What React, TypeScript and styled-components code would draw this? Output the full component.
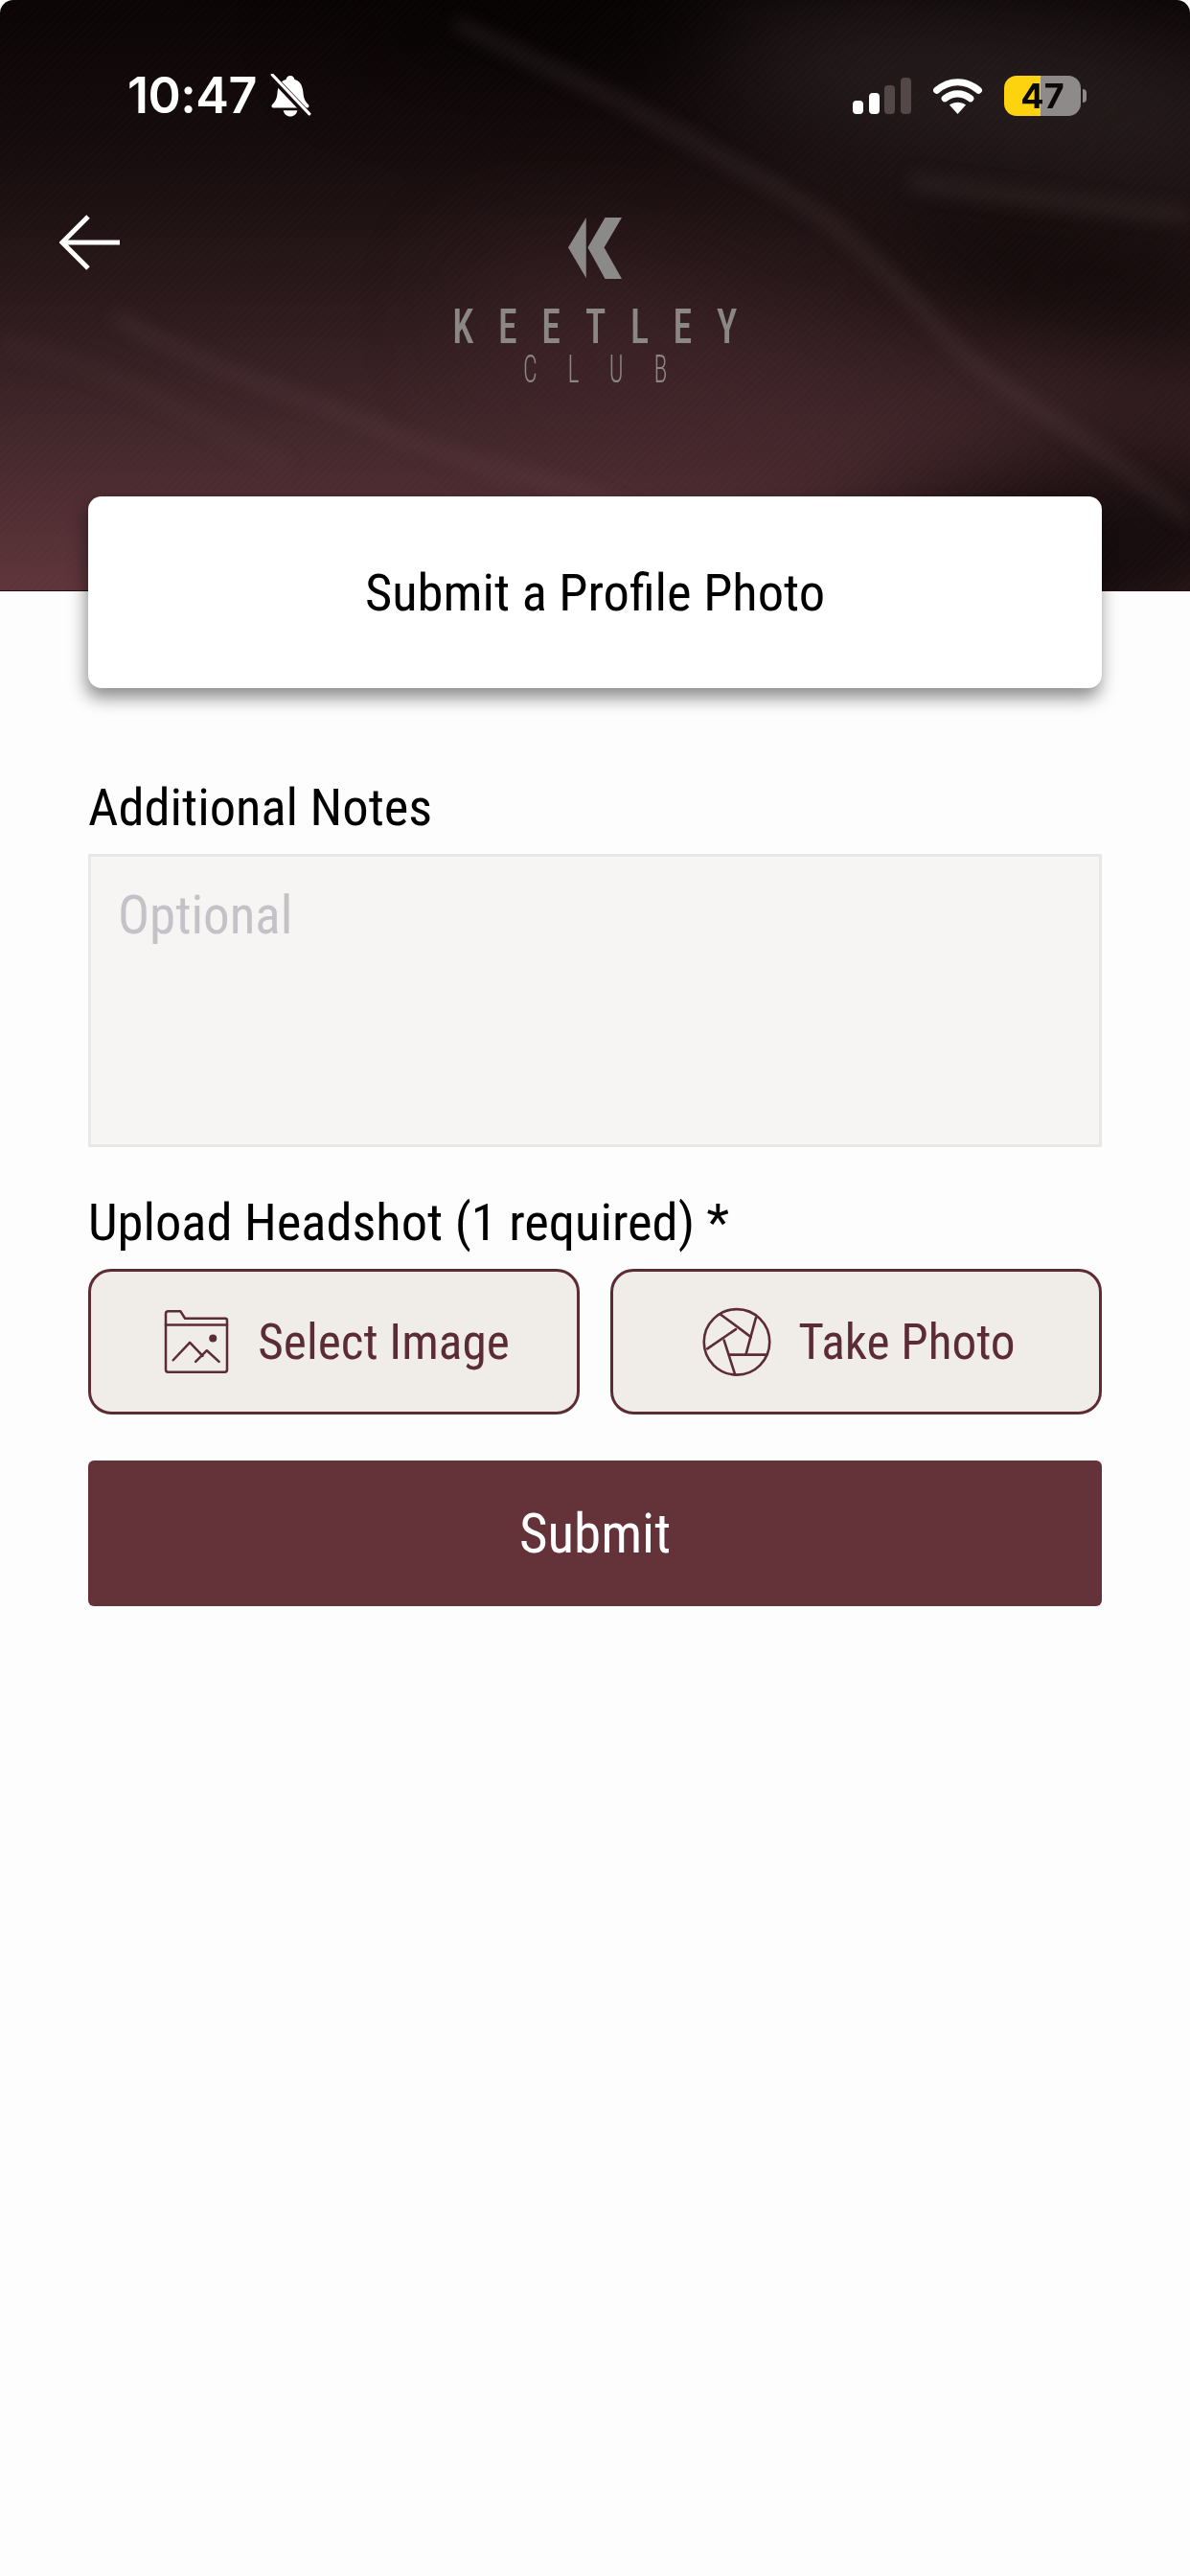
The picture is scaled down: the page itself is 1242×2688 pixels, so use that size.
import React from "react";
import styled, { createGlobalStyle } from "styled-components";

const GlobalStyle = createGlobalStyle`
  html, body {
    margin: 0;
    padding: 0;
    background: #fdfdfd;
  }
  * {
    box-sizing: border-box;
  }
`;

const maroon = "#5c2c35";
const condensed = `"Roboto", "Liberation Sans", sans-serif`;

const Page = styled.div`
  background: #fdfdfd;
  display: flex;
  flex-direction: column;
  font-family: ${condensed};
  font-stretch: 75%;
  height: 2688px;
  width: 1242px;
`;

const Header = styled.header`
  background: linear-gradient(180deg, #0b0505 0%, #160c0d 25%, #2a191b 50%, #44282c 75%, #5f353b 100%);
  border-bottom: 1px solid #2a1015;
  border-top-left-radius: 14px;
  border-top-right-radius: 14px;
  flex: none;
  height: 617px;
  overflow: hidden;
  position: relative;
`;

const Fabric = styled.svg`
  height: 100%;
  left: 0;
  position: absolute;
  top: 0;
  width: 100%;
`;

const StatusBar = styled.div`
  align-items: center;
  display: flex;
  justify-content: space-between;
  padding: 72px 114px 0 133px;
  position: relative;
`;

const TimeGroup = styled.div`
  align-items: center;
  display: flex;
  gap: 12px;
`;

const Time = styled.span`
  color: #fff;
  font-family: "Inter", sans-serif;
  font-size: 52px;
  font-stretch: 100%;
  font-weight: 600;
  letter-spacing: -0.5px;
  line-height: 56px;
`;

const StatusIcons = styled.div`
  align-items: center;
  display: flex;
  gap: 22px;
`;

const Battery = styled.div`
  align-items: center;
  background: linear-gradient(90deg, #fdd30f 0 47%, #8e8a8a 47% 100%);
  border-radius: 13px;
  color: #0b0807;
  display: flex;
  font-family: "Inter", sans-serif;
  font-size: 36px;
  font-stretch: 100%;
  font-weight: 700;
  height: 42px;
  justify-content: center;
  position: relative;
  width: 80px;

  &::after {
    background: #8e8a8a;
    border-radius: 0 6px 6px 0;
    content: "";
    height: 14px;
    position: absolute;
    right: -6px;
    top: 14px;
    width: 4px;
  }
`;

const NavRow = styled.div`
  align-items: flex-start;
  display: flex;
  padding: 78px 0 0 62px;
  position: relative;
`;

const BackButton = styled.button`
  background: none;
  border: 0;
  display: block;
  flex: none;
  height: 94px;
  margin: 0;
  padding: 0;
  width: 64px;
`;

const Logo = styled.div`
  align-items: center;
  color: #8b8787;
  display: flex;
  flex-direction: column;
  margin-left: 155px;
  margin-top: 21px;
  width: 680px;
`;

const KeetleyText = styled.div`
  font-family: "Roboto", sans-serif;
  font-size: 50px;
  font-stretch: 75%;
  font-weight: 500;
  letter-spacing: 32px;
  line-height: 50px;
  margin-right: -26px;
  margin-top: 25px;
  transform: scaleX(0.8);
`;

const ClubText = styled.div`
  font-family: "Roboto", sans-serif;
  font-size: 40px;
  font-stretch: 75%;
  font-weight: 300;
  letter-spacing: 49px;
  line-height: 40px;
  margin-right: -32px;
  margin-top: 0;
  transform: scaleX(0.65);
`;

const Content = styled.main`
  display: flex;
  flex-direction: column;
  margin-top: -99px;
  padding: 0 92px;
  position: relative;
`;

const TitleCard = styled.div`
  align-items: center;
  background: #fff;
  border-radius: 14px;
  box-shadow: -2px 10px 18px rgba(0, 0, 0, 0.45);
  color: #000;
  display: flex;
  font-size: 54.5px;
  height: 200px;
  justify-content: center;
`;

const FieldLabel = styled.label`
  color: #000;
  display: block;
  font-size: 54.5px;
  line-height: 60px;
`;

const NotesLabel = styled(FieldLabel)`
  margin-top: 94px;
`;

const UploadLabel = styled(FieldLabel)`
  margin-top: 48px;
`;

const NotesInput = styled.textarea`
  background: #f6f5f4;
  border: 3px solid #e9e8e8;
  display: block;
  font-family: ${condensed};
  font-size: 55px;
  font-stretch: 75%;
  height: 306px;
  margin-top: 19px;
  outline: none;
  padding: 29px 28px;
  resize: none;
  width: 100%;

  &::placeholder {
    color: #c4c2c7;
    opacity: 1;
  }
`;

const UploadRow = styled.div`
  display: grid;
  gap: 32px;
  grid-template-columns: 1fr 1fr;
  margin-top: 19px;
`;

const UploadButton = styled.button<{ $gap: number }>`
  align-items: center;
  background: #f0ece8;
  border: 3px solid ${maroon};
  border-radius: 24px;
  color: ${maroon};
  display: flex;
  font-family: ${condensed};
  font-size: 51.3px;
  font-stretch: 75%;
  gap: ${(p) => p.$gap}px;
  height: 152px;
  justify-content: center;
  padding: 0 0 0 6px;
`;

const SubmitButton = styled.button`
  background: #64333a;
  border: 0;
  border-radius: 6px;
  color: #fff;
  font-family: ${condensed};
  font-size: 57px;
  font-stretch: 75%;
  height: 152px;
  margin-top: 48px;
  padding: 0;
  width: 100%;
`;

const FabricArt = () => (
  <Fabric viewBox="0 0 1242 617" preserveAspectRatio="none" aria-hidden="true">
    <defs>
      <filter id="soft" filterUnits="userSpaceOnUse" x="-300" y="-300" width="1842" height="1217" colorInterpolationFilters="sRGB">
        <feGaussianBlur stdDeviation="55" />
      </filter>
      <filter id="fine" filterUnits="userSpaceOnUse" x="-300" y="-300" width="1842" height="1217" colorInterpolationFilters="sRGB">
        <feGaussianBlur stdDeviation="9" />
      </filter>
      <pattern id="twill" width="6" height="6" patternUnits="userSpaceOnUse" patternTransform="rotate(-45)">
        <rect width="6" height="2" fill="#ffdcdc" opacity="0.012" />
      </pattern>
    </defs>
    <g filter="url(#soft)">
      <ellipse cx="1040" cy="95" rx="300" ry="75" fill="#2f2526" opacity="0.7" transform="rotate(8 1040 95)" />
      <ellipse cx="560" cy="10" rx="200" ry="50" fill="#040202" opacity="0.85" />
      <ellipse cx="1130" cy="290" rx="220" ry="55" fill="#0e0707" transform="rotate(15 1130 290)" />
      <ellipse cx="1100" cy="590" rx="280" ry="110" fill="#140b0c" transform="rotate(-12 1100 590)" />
      <ellipse cx="700" cy="400" rx="230" ry="90" fill="#43262b" opacity="0.5" transform="rotate(25 700 400)" />
      <ellipse cx="1170" cy="410" rx="110" ry="38" fill="#3a2327" opacity="0.75" />
    </g>
    <g filter="url(#fine)" fill="none">
      <path d="M475 24C570 70 640 100 713 142S840 210 871 236 950 310 990 354 1090 430 1148 472 1210 520 1242 543" stroke="#6a5759" strokeWidth="10" opacity="0.3" />
      <path d="M119 330C220 390 310 410 396 448S540 490 618 519 720 590 760 617" stroke="#7a5a60" strokeWidth="8" opacity="0.3" />
      <path d="M950 190C1050 205 1150 215 1242 226" stroke="#4e3f40" strokeWidth="14" opacity="0.35" />
      <path d="M0 360C110 380 190 430 300 490" stroke="#6a4c50" strokeWidth="14" opacity="0.14" />
    </g>
    <rect width="1242" height="617" fill="url(#twill)" />
  </Fabric>
);

const MutedBell = () => (
  <svg width="46" height="46" viewBox="0 0 42 44" aria-hidden="true">
    <path
      d="M21 2c-2.500 0-4 1.800-4.300 3.800C10.500 7.500 8.500 13 8 20c-.3 5-2.500 8-5 10.500-1.300 1.300-.6 3.500 1.400 3.500h33.200c2 0 2.700-2.200 1.400-3.500-2.500-2.500-4.700-5.500-5-10.500-.5-7-2.500-12.500-8.700-14.200C25 3.800 23.500 2 21 2z"
      fill="#fff"
    />
    <path d="M14 36.500h14c-.6 3.600-3.500 6-7 6s-6.400-2.400-7-6z" fill="#fff" />
    <path d="M2 2l38 40" stroke="#160c0d" strokeWidth="7" />
    <path d="M3 1l37 39" stroke="#fff" strokeWidth="3" strokeLinecap="round" />
  </svg>
);

const SignalBars = () => (
  <svg width="61" height="38" viewBox="0 0 61 38" aria-hidden="true">
    <rect x="0" y="24" width="11" height="14" rx="4" fill="#fff" />
    <rect x="17" y="16" width="11" height="22" rx="4" fill="#fff" />
    <rect x="33" y="8" width="11" height="30" rx="4" fill="#544748" />
    <rect x="50" y="0" width="11" height="38" rx="4" fill="#544748" />
  </svg>
);

const WifiIcon = () => (
  <svg width="53" height="38" viewBox="0 0 54 40" aria-hidden="true">
    <path d="M4 14C18 2 36 2 50 14" fill="none" stroke="#fff" strokeWidth="7.500" strokeLinecap="round" />
    <path d="M13 23c8.500-7 19.500-7 28 0" fill="none" stroke="#fff" strokeWidth="7.500" strokeLinecap="round" />
    <path d="M18 30c5.500-4 12.500-4 18 0L27 40z" fill="#fff" />
  </svg>
);

const BackArrow = () => (
  <svg width="64" height="94" viewBox="0 0 64 94" aria-hidden="true">
    <path d="M30 20L3 47l27 27M3 47h60" fill="none" stroke="#fff" strokeWidth="5" />
  </svg>
);

const LogoMark = () => (
  <svg width="56" height="64" viewBox="458 82 170 190" preserveAspectRatio="none" aria-hidden="true">
    <path d="M515 82L458 175l57 95z" fill="#8b8a89" />
    <path d="M575 82h53l-56 93 56 97h-53l-55-97z" fill="#8b8a89" />
  </svg>
);

const FolderImageIcon = () => (
  <svg width="68" height="68" viewBox="306 202 203 201" aria-hidden="true">
    <g fill="none" stroke={maroon} strokeWidth="7.500" strokeLinejoin="round" strokeLinecap="round">
      <path d="M312 240v-25q0-7 8-7h38l14 22h125q6 0 6 6v154q0 7-7 7H319q-7 0-7-7z" />
      <path d="M312 250h191" />
      <path d="M335 360l52-55 40 42" />
      <path d="M405 365l35-35 38 35" />
    </g>
    <circle cx="459" cy="292" r="12" fill={maroon} />
  </svg>
);

const ApertureIcon = () => (
  <svg width="72" height="72" viewBox="310 196 206 206" aria-hidden="true">
    <g fill="none" stroke={maroon} strokeWidth="7.500" strokeLinecap="round">
      <circle cx="413" cy="300" r="98" />
      <path d="M365 218l90 67" />
      <path d="M470 228l-30 110" />
      <path d="M500 338H392" />
      <path d="M408 398l-33-103" />
      <path d="M325 320l85-58" />
    </g>
  </svg>
);

export default function App() {
  return (
    <Page>
      <GlobalStyle />
      <Header>
        <FabricArt />
        <StatusBar>
          <TimeGroup>
            <Time>10:47</Time>
            <MutedBell />
          </TimeGroup>
          <StatusIcons>
            <SignalBars />
            <WifiIcon />
            <Battery>47</Battery>
          </StatusIcons>
        </StatusBar>
        <NavRow>
          <BackButton aria-label="Back">
            <BackArrow />
          </BackButton>
          <Logo>
            <LogoMark />
            <KeetleyText>KEETLEY</KeetleyText>
            <ClubText>CLUB</ClubText>
          </Logo>
        </NavRow>
      </Header>
      <Content>
        <TitleCard>Submit a Profile Photo</TitleCard>
        <NotesLabel>Additional Notes</NotesLabel>
        <NotesInput placeholder="Optional" />
        <UploadLabel>Upload Headshot (1 required) *</UploadLabel>
        <UploadRow>
          <UploadButton $gap={30}>
            <FolderImageIcon />
            Select Image
          </UploadButton>
          <UploadButton $gap={28}>
            <ApertureIcon />
            Take Photo
          </UploadButton>
        </UploadRow>
        <SubmitButton>Submit</SubmitButton>
      </Content>
    </Page>
  );
}
